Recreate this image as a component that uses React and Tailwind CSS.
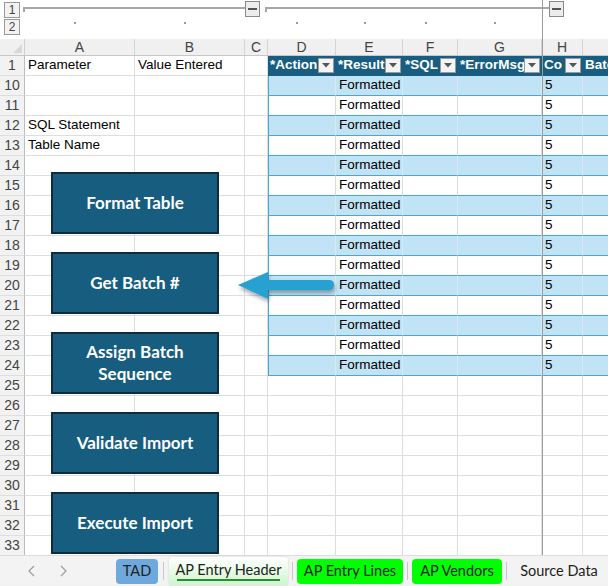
import React from 'react';

const COLS = [
  { key: 'A', w: 110 },
  { key: 'B', w: 110 },
  { key: 'C', w: 23 },
  { key: 'D', w: 68 },
  { key: 'E', w: 67 },
  { key: 'F', w: 55 },
  { key: 'G', w: 84 },
  { key: 'H', w: 41 },
  { key: 'I', w: 60 },
];

const HEADERS = { D: '*Action', E: '*Result', F: '*SQL', G: '*ErrorMsg', H: 'Co', I: 'Batch' };
const TABLE_COLS = ['D', 'E', 'F', 'G', 'H', 'I'];

const ROWS = [1];
for (let r = 10; r <= 33; r++) ROWS.push(r);

function cellText(row, col) {
  if (row === 1 && col === 'A') return 'Parameter';
  if (row === 1 && col === 'B') return 'Value Entered';
  if (row === 12 && col === 'A') return 'SQL Statement';
  if (row === 13 && col === 'A') return 'Table Name';
  if (row >= 10 && row <= 24 && col === 'E') return 'Formatted';
  if (row >= 10 && row <= 24 && col === 'H') return '5';
  return '';
}

function FilterButton() {
  return (
    <span className="ml-auto mr-[2px] flex h-[15px] w-[16px] shrink-0 items-center justify-center border border-[#9a9a9a] bg-[#f4f4f4]">
      <svg width="8" height="5" viewBox="0 0 8 5">
        <path d="M0 0 L8 0 L4 4.5 Z" fill="#555" />
      </svg>
    </span>
  );
}

function Cell({ row, col, w }) {
  const inTable = TABLE_COLS.includes(col) && row <= 24;
  if (row === 1 && inTable) {
    return (
      <div
        style={{ width: w }}
        className="flex h-[20px] shrink-0 items-center overflow-hidden whitespace-nowrap border-b border-[#1b5d7e] bg-[#195e80] pl-[2px] text-[13.5px] font-bold text-white"
      >
        <span className="min-w-0 overflow-hidden">{HEADERS[col]}</span>
        {col !== 'I' && <FilterButton />}
      </div>
    );
  }
  if (inTable) {
    const banded = row % 2 === 0;
    return (
      <div
        style={{ width: w }}
        className={
          'flex h-[20px] shrink-0 items-center overflow-hidden whitespace-nowrap border-b border-r pl-[3px] text-[13.5px] text-black ' +
          (banded ? 'border-b-[#4aa6d8] border-r-[#d6eaf5] bg-[#c0e4f5] ' : 'border-b-[#4aa6d8] border-r-[#dcdcdc] bg-white ') +
          (col === 'D' ? 'border-l border-l-[#4aa6d8]' : '')
        }
      >
        {cellText(row, col)}
      </div>
    );
  }
  return (
    <div
      style={{ width: w }}
      className="flex h-[20px] shrink-0 items-center overflow-hidden whitespace-nowrap border-b border-r border-[#dedede] bg-white pl-[3px] text-[13.5px] text-black"
    >
      {cellText(row, col)}
    </div>
  );
}

function MacroButton({ top, children }) {
  return (
    <div
      style={{ top }}
      className="absolute left-[51px] flex h-[62px] w-[168px] items-center justify-center border-2 border-[#0f2c3d] bg-[#175d7f] text-center text-[17px] font-bold leading-[22px] text-white [font-family:Lato,'Open_Sans',sans-serif]"
    >
      {children}
    </div>
  );
}

function Minus() {
  return (
    <div className="flex h-[16px] w-[15px] shrink-0 items-center justify-center border border-[#8a8a8a] bg-[#ececec]">
      <div className="h-[2px] w-[9px] bg-[#555]" />
    </div>
  );
}

function Tab({ children, className }) {
  return (
    <div className={'flex h-[25px] shrink-0 items-center justify-center whitespace-nowrap rounded-[4px] text-[14.5px] text-[#222] ' + className}>
      {children}
    </div>
  );
}

export default function App() {
  return (
    <div className="relative h-[586px] w-[608px] overflow-hidden bg-white [font-family:'Liberation_Sans',Arial,sans-serif]">
      {/* outline area */}
      <div className="flex h-[39px] bg-white">
        <div className="flex w-[25px] flex-col items-start gap-[1px] pl-[4px] pt-[2px] text-[12px] leading-none text-[#444]">
          <div className="flex h-[16px] w-[16px] items-center justify-center border border-[#999] bg-[#f2f2f2]">1</div>
          <div className="flex h-[16px] w-[16px] items-center justify-center border border-[#999] bg-[#f2f2f2]">2</div>
        </div>
        <div className="flex flex-col">
          <div className="flex items-start pt-[1px]">
            <div className="ml-[3px] flex w-[237px] items-start">
              <div className="mt-[6px] h-[5px] flex-1 border-l-2 border-t-2 border-[#a8a8a8]" />
              <Minus />
            </div>
            <div className="ml-[5px] flex w-[299px] items-start">
              <div className="mt-[6px] h-[5px] flex-1 border-l-2 border-t-2 border-[#a8a8a8]" />
              <Minus />
            </div>
          </div>
          <div className="mt-[5px] flex">
            {COLS.map((c) => (
              <div key={c.key} style={{ width: c.w }} className="flex shrink-0 justify-center">
                {['A', 'B', 'D', 'E', 'F', 'G'].includes(c.key) && <div className="h-[2px] w-[2px] bg-[#999]" />}
              </div>
            ))}
          </div>
        </div>
      </div>

      {/* column letters */}
      <div className="flex h-[17px] border-b border-[#c8c8c8] bg-[#f0f0f0] text-[14px] leading-none text-[#444]">
        <div className="relative w-[25px] shrink-0 border-r border-[#d0d0d0]">
          <svg className="absolute bottom-[2px] right-[2px]" width="9" height="9" viewBox="0 0 9 9">
            <path d="M9 0 L9 9 L0 9 Z" fill="#d8d8d8" />
          </svg>
        </div>
        {COLS.map((c) => (
          <div key={c.key} style={{ width: c.w }} className="flex shrink-0 items-center justify-center border-r border-[#d4d4d4]">
            {c.key === 'I' ? '' : c.key}
          </div>
        ))}
      </div>

      {/* sheet body */}
      <div className="relative">
        {ROWS.map((r) => (
          <div key={r} className="flex">
            <div className="flex h-[20px] w-[25px] shrink-0 items-center justify-center border-b border-r border-b-[#dedede] border-r-[#bdbdbd] bg-[#f2f2f2] text-[14px] text-[#444]">
              {r}
            </div>
            {COLS.map((c) => (
              <Cell key={c.key} row={r} col={c.key} w={c.w} />
            ))}
          </div>
        ))}

        <MacroButton top={116}>Format Table</MacroButton>
        <MacroButton top={196}>Get Batch #</MacroButton>
        <MacroButton top={276}>
          <span>
            Assign Batch
            <br />
            Sequence
          </span>
        </MacroButton>
        <MacroButton top={356}>Validate Import</MacroButton>
        <MacroButton top={436}>Execute Import</MacroButton>

        <svg className="absolute left-[234px] top-[210px]" width="108" height="40" viewBox="0 0 108 40">
          <defs>
            <filter id="sh" x="-20%" y="-40%" width="140%" height="200%">
              <feDropShadow dx="1" dy="3" stdDeviation="2" floodColor="#000" floodOpacity="0.35" />
            </filter>
          </defs>
          <g filter="url(#sh)">
            <path d="M4 19 L34 6 L34 14 L95 14 Q100 14 100 19 Q100 24 95 24 L34 24 L34 33 Z" fill="#27a1d1" />
          </g>
        </svg>
      </div>

      {/* freeze pane line */}
      <div className="absolute bottom-[31px] left-[542px] top-0 w-[1px] bg-[#9c9c9c]" />

      {/* sheet tabs */}
      <div className="absolute bottom-0 left-0 flex h-[31px] w-[608px] items-center border-t border-[#dcdcdc] bg-[#f3f3f3] [font-family:Lato,'Noto_Sans',sans-serif]">
        <div className="flex w-[110px] shrink-0 items-center gap-[21px] pl-[27px]">
          <svg width="10" height="14" viewBox="0 0 10 14">
            <path d="M7 2 L2 7 L7 12" fill="none" stroke="#a0a0a0" strokeWidth="1.3" />
          </svg>
          <svg width="10" height="14" viewBox="0 0 10 14">
            <path d="M3 2 L8 7 L3 12" fill="none" stroke="#a0a0a0" strokeWidth="1.3" />
          </svg>
        </div>
        <Tab className="ml-[6px] w-[42px] bg-[#6fa8dc]">TAD</Tab>
        <div className="mx-[5px] h-[18px] w-[1px] shrink-0 bg-[#c8c8c8]" />
        <div className="relative flex h-[28px] w-[119px] shrink-0 items-center justify-center whitespace-nowrap rounded-t-[4px] bg-gradient-to-b from-white to-[#cdf7cd] text-[14.5px] text-[#222] shadow-[0_0_2px_rgba(0,0,0,0.15)]">
          <span className="-mt-[3px]">AP Entry Header</span>
          <div className="absolute bottom-[4px] left-[8px] right-[8px] h-[2px] bg-[#2e8b2e]" />
        </div>
        <div className="mx-[4px] h-[18px] w-[1px] shrink-0 bg-[#c8c8c8]" />
        <Tab className="w-[106px] bg-[#00ff00]">AP Entry Lines</Tab>
        <div className="mx-[4px] h-[18px] w-[1px] shrink-0 bg-[#c8c8c8]" />
        <Tab className="w-[90px] bg-[#00ff00]">AP Vendors</Tab>
        <div className="mx-[4px] h-[18px] w-[1px] shrink-0 bg-[#c8c8c8]" />
        <Tab className="w-[96px] bg-transparent">Source Data</Tab>
      </div>
    </div>
  );
}
